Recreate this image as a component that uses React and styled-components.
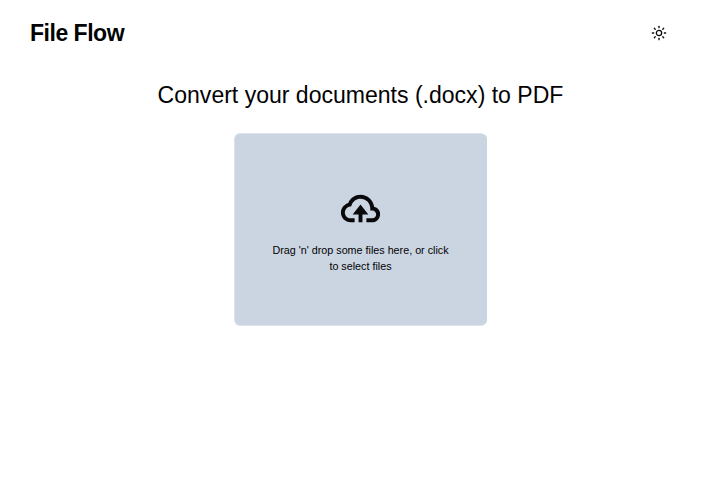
import React from "react";
import styled, { createGlobalStyle } from "styled-components";
import { BiCloudUpload } from "react-icons/bi";
import { Sun } from "lucide-react";

const GlobalStyle = createGlobalStyle`
  *, *::before, *::after { box-sizing: border-box; }
  body {
    margin: 0;
    background: #fff;
    color: #09090b;
    font-family: "Liberation Sans", Arial, sans-serif;
  }
  h1, h2, p { margin: 0; font-weight: 400; }
`;

const Page = styled.div`
  min-height: 100vh;
  display: flex;
  flex-direction: column;
`;

const Header = styled.header`
  display: flex;
  align-items: center;
  justify-content: space-between;
  height: 66px;
  padding: 0 54px 0 30px;
`;

const Brand = styled.h1`
  && { font-weight: 700; }
  font-size: 23px;
  line-height: 30px;
  letter-spacing: -0.48px;
  color: #020204;
`;

const ThemeButton = styled.button`
  display: flex;
  padding: 0;
  border: 0;
  background: none;
  color: inherit;
`;

const Main = styled.main`
  display: flex;
  flex-direction: column;
  align-items: center;
  padding-top: 13px;
`;

const Title = styled.h2`
  font-size: 23.04px;
  line-height: 32px;
  color: #020204;
`;

const Dropzone = styled.div`
  display: flex;
  flex-direction: column;
  align-items: center;
  width: 253px;
  height: 193px;
  margin-top: 22px;
  padding-top: 51px;
  border: 1px solid #dde4ec;
  border-right-color: #cbd5e1;
  border-radius: 6px;
  background: #cbd5e1;
`;

const Hint = styled.p`
  width: 182px;
  margin-top: 10px;
  font-size: 10.75px;
  line-height: 16px;
  text-align: center;
  color: #020204;
`;

export default function App() {
  return (
    <Page>
      <GlobalStyle />
      <Header>
        <Brand>File Flow</Brand>
        <ThemeButton aria-label="Toggle theme"><Sun size={16} strokeWidth={1.9} /></ThemeButton>
      </Header>
      <Main>
        <Title>Convert your documents (.docx) to PDF</Title>
        <Dropzone>
          <BiCloudUpload size={47} />
          <Hint>Drag 'n' drop some files here, or click to select files</Hint>
        </Dropzone>
      </Main>
    </Page>
  );
}
